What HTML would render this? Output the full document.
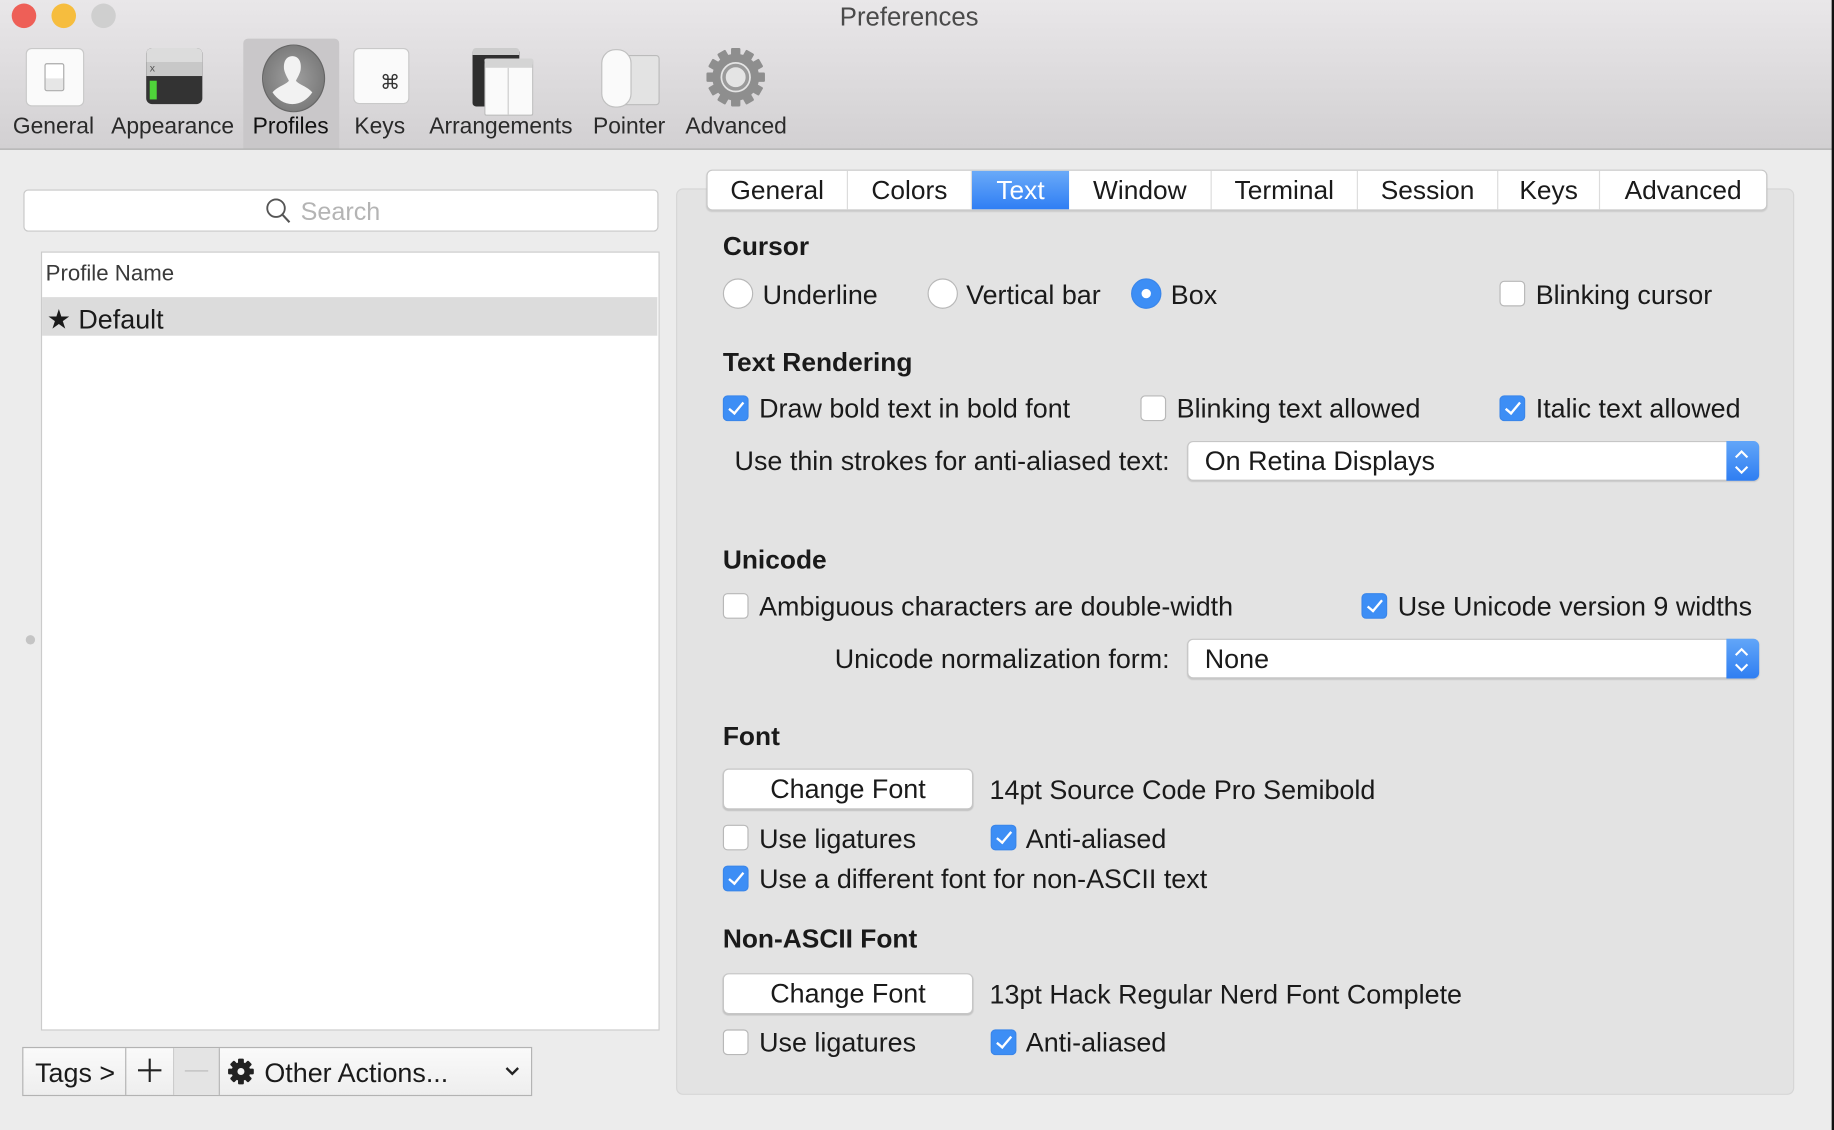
<!DOCTYPE html>
<html><head><meta charset="utf-8"><style>
html,body{margin:0;padding:0;width:1834px;height:1130px;overflow:hidden;background:#ececec}
#w{position:absolute;left:0;top:0;width:1568px;height:966px;transform:scale(1.16964,1.16977);transform-origin:0 0;font-family:"Liberation Sans",sans-serif;color:#1a1a1a;background:#ececec}
.a{position:absolute}
.t{position:absolute;font-size:23px;white-space:nowrap;line-height:26px}
.h{font-weight:bold;font-size:22.5px}
.cb{position:absolute;width:20px;height:20px;border:1px solid #b8b8b8;border-radius:4px;background:#fff}
.cb.on{background:#3d8ef5;border-color:#3a86ea}
.cb.on::after{content:"";position:absolute;left:7px;top:2px;width:5px;height:11px;border:solid #fff;border-width:0 2.5px 2.5px 0;transform:rotate(40deg)}
.rd{position:absolute;width:24px;height:24px;border:1px solid #b8b8b8;border-radius:50%;background:#fff}
.rd.on{background:#3d8ef5;border-color:#3a86ea}
.rd.on::after{content:"";position:absolute;left:8px;top:8px;width:8px;height:8px;border-radius:50%;background:#fff}
.pop{position:absolute;left:1015px;width:487px;height:32px;background:#fff;border:1px solid #c6c6c6;border-radius:5px;box-shadow:0 1px 1px rgba(0,0,0,.12)}
.pop span{position:absolute;left:14px;top:3px;font-size:23px}
.pop i{position:absolute;right:-1px;top:-1px;width:28px;height:34px;background:linear-gradient(#62a6f8,#2f7ef2);border-radius:0 5px 5px 0}
.pop svg{position:absolute;right:6px;top:5px}
.btn{position:absolute;left:618px;width:212px;height:33px;background:#fff;border:1px solid #c6c6c6;border-radius:5px;box-shadow:0 1px 1px rgba(0,0,0,.15);text-align:center;font-size:23px;line-height:33px}
.tab{position:absolute;top:0;height:33px;line-height:33px;font-size:22.5px;text-align:center;border-right:1px solid #dcdcdc}
.tl{position:absolute;top:99px;font-size:19.5px;color:#2a2a2a;line-height:1}
</style></head><body><div id="w">
<div class="a" style="left:0;top:0;width:1568px;height:127px;background:linear-gradient(#e9e7e9,#d2d0d2);border-bottom:1px solid #a8a8a8"></div>
<div class="a" style="left:10px;top:3px;width:21px;height:21px;border-radius:50%;background:#ee5f57"></div>
<div class="a" style="left:44px;top:3px;width:21px;height:21px;border-radius:50%;background:#f6bd3e"></div>
<div class="a" style="left:78px;top:3px;width:21px;height:21px;border-radius:50%;background:#cfcfcf"></div>
<div class="t" style="left:718px;top:2px;font-size:22px;color:#4a4a4a">Preferences</div>
<div class="a" style="left:208px;top:33px;width:82px;height:94px;background:#c9c7c9;border-radius:4px 4px 0 0"></div>
<div class="a" style="left:22px;top:41px;width:48px;height:48px;background:#fafafa;border:1px solid #c9c9c9;border-radius:5px"></div>
<div class="a" style="left:38px;top:54px;width:15px;height:22px;background:#fff;border:1px solid #aaa;border-radius:2px;box-shadow:inset 0 -10px 0 #e6e6e6"></div>
<div class="a" style="left:125px;top:41px;width:48px;height:48px;background:#333;border-radius:5px;overflow:hidden"><div style="height:12px;background:#dcdcdc"></div><div style="height:12px;background:#c8c8c8;font-size:9px;color:#555;padding-left:3px">x</div><div style="position:absolute;left:3px;top:28px;width:6px;height:16px;background:#4fd33a"></div></div>
<div class="a" style="left:224px;top:38px;width:52px;height:56px;border-radius:50%;background:radial-gradient(#a0a0a0,#6d6d6d);border:1px solid #666"></div>
<svg class="a" style="left:224px;top:38px" width="52" height="56"><path d="M26 10c6 0 8 6 7 12-1 4-3 7-4 9 2 3 10 5 14 10-4 6-10 10-17 10s-13-4-17-10c4-5 12-7 14-10-1-2-3-5-4-9-1-6 1-12 7-12z" fill="#f2f2f2"/></svg>
<div class="a" style="left:302px;top:41px;width:48px;height:48px;background:#fafafa;border:1px solid #c9c9c9;border-radius:5px;font-size:17px;text-align:right;box-sizing:border-box;padding:19px 7px 0 0;color:#333">⌘</div>
<div class="a" style="left:404px;top:41px;width:40px;height:44px;background:#2e2e2e;border-top:6px solid #ccc;border-radius:3px"></div>
<div class="a" style="left:414px;top:50px;width:40px;height:40px;background:#fafafa;border:1px solid #bbb;border-top:8px solid #d4d4d4;border-radius:2px"><div style="position:absolute;left:19px;top:0;width:1px;height:100%;background:#ccc"></div></div>
<div class="a" style="left:528px;top:47px;width:34px;height:41px;background:#e3e3e3;border:1px solid #bbb;border-radius:3px"></div>
<div class="a" style="left:514px;top:42px;width:24px;height:48px;background:#fafafa;border:1px solid #c0c0c0;border-radius:12px"></div>
<svg class="a" style="left:602px;top:39px" width="54" height="54" viewBox="0 0 54 54"><g fill="#8e8e8e"><circle cx="27" cy="27" r="20"/><g id="k"><rect x="23" y="2" width="8" height="10" rx="1"/></g><use href="#k" transform="rotate(30 27 27)"/><use href="#k" transform="rotate(60 27 27)"/><use href="#k" transform="rotate(90 27 27)"/><use href="#k" transform="rotate(120 27 27)"/><use href="#k" transform="rotate(150 27 27)"/><use href="#k" transform="rotate(180 27 27)"/><use href="#k" transform="rotate(210 27 27)"/><use href="#k" transform="rotate(240 27 27)"/><use href="#k" transform="rotate(270 27 27)"/><use href="#k" transform="rotate(300 27 27)"/><use href="#k" transform="rotate(330 27 27)"/></g><circle cx="27" cy="27" r="13" fill="#e4e4e4"/><circle cx="27" cy="27" r="10" fill="none" stroke="#9a9a9a" stroke-width="3"/></svg>
<div class="tl" style="left:11px">General</div>
<div class="tl" style="left:95px">Appearance</div>
<div class="tl" style="left:216px;color:#111">Profiles</div>
<div class="tl" style="left:303px">Keys</div>
<div class="tl" style="left:367px">Arrangements</div>
<div class="tl" style="left:507px">Pointer</div>
<div class="tl" style="left:586px">Advanced</div>
<div class="a" style="left:1566px;top:0;width:2px;height:966px;background:#111"></div>
<div class="a" style="left:20px;top:162px;width:541px;height:34px;background:#fff;border:1px solid #c8c8c8;border-radius:4px"></div>
<svg class="a" style="left:226px;top:168px" width="24" height="24"><circle cx="10" cy="10" r="7.5" fill="none" stroke="#555" stroke-width="1.6"/><path d="M15.5 15.5l6 6.5" stroke="#555" stroke-width="1.8"/></svg>
<div class="t" style="left:257px;top:168px;color:#b4b4b4;font-size:21.5px">Search</div>
<div class="a" style="left:35px;top:215px;width:527px;height:664px;background:#fff;border:1px solid #cbcbcb"></div>
<div class="t" style="left:39px;top:222px;font-size:19px;color:#3a3a3a">Profile Name</div>
<div class="a" style="left:36px;top:254px;width:526px;height:33px;background:#dcdcdc"></div>
<div class="t" style="left:40px;top:260px">★ Default</div>
<div class="a" style="left:22px;top:543px;width:8px;height:8px;border-radius:50%;background:#c4c4c4"></div>
<div class="a" style="left:19px;top:895px;width:434px;height:40px;background:linear-gradient(#fafafa,#eeeeee);border:1px solid #b3b3b3"></div>
<div class="a" style="left:107px;top:896px;width:1px;height:40px;background:#b3b3b3"></div>
<div class="a" style="left:148px;top:896px;width:1px;height:40px;background:#c8c8c8"></div>
<div class="a" style="left:149px;top:896px;width:38px;height:40px;background:#e4e4e4"></div>
<div class="a" style="left:187px;top:896px;width:1px;height:40px;background:#b3b3b3"></div>
<div class="t" style="left:30px;top:904px">Tags &gt;</div>
<svg class="a" style="left:117px;top:904px" width="22" height="22"><path d="M11 1v20M1 11h20" stroke="#222" stroke-width="1.8"/></svg>
<div class="a" style="left:158px;top:915px;width:20px;height:1px;background:#bbb"></div>
<svg class="a" style="left:194px;top:904px" width="24" height="24" viewBox="0 0 24 24"><g fill="#222"><circle cx="12" cy="12" r="8"/><rect x="9.5" y="1" width="5" height="22" rx="1"/><rect x="9.5" y="1" width="5" height="22" rx="1" transform="rotate(45 12 12)"/><rect x="9.5" y="1" width="5" height="22" rx="1" transform="rotate(90 12 12)"/><rect x="9.5" y="1" width="5" height="22" rx="1" transform="rotate(135 12 12)"/></g><circle cx="12" cy="12" r="3" fill="#f3f3f3"/></svg>
<div class="t" style="left:226px;top:904px">Other Actions...</div>
<svg class="a" style="left:430px;top:910px" width="16" height="12"><path d="M3 3l5 5 5-5" fill="none" stroke="#222" stroke-width="2"/></svg>
<div class="a" style="left:578px;top:161px;width:954px;height:773px;background:#e3e3e3;border:1px solid #d6d6d6;border-radius:6px"></div>
<div class="a" style="left:604px;top:145px;width:905px;height:33px;background:#fff;border:1px solid #c8c8c8;border-radius:5px;box-shadow:0 1px 1px rgba(0,0,0,.1);overflow:hidden">
<div class="tab" style="left:0;width:119px">General</div>
<div class="tab" style="left:120px;width:105px">Colors</div>
<div class="tab" style="left:226px;width:83px;background:linear-gradient(#6aaaf8,#2f7ef4);color:#fff;border:none">Text</div>
<div class="tab" style="left:309px;width:121px">Window</div>
<div class="tab" style="left:431px;width:124px">Terminal</div>
<div class="tab" style="left:556px;width:119px">Session</div>
<div class="tab" style="left:676px;width:86px">Keys</div>
<div class="tab" style="left:763px;width:142px;border:none">Advanced</div>
</div>
<div class="t h" style="left:618px;top:198px">Cursor</div>
<div class="rd" style="left:618px;top:238px"></div><div class="t" style="left:652px;top:239px">Underline</div>
<div class="rd" style="left:793px;top:238px"></div><div class="t" style="left:826px;top:239px">Vertical bar</div>
<div class="rd on" style="left:967px;top:238px"></div><div class="t" style="left:1001px;top:239px">Box</div>
<div class="cb" style="left:1282px;top:240px"></div><div class="t" style="left:1313px;top:239px">Blinking cursor</div>
<div class="t h" style="left:618px;top:297px">Text Rendering</div>
<div class="cb on" style="left:618px;top:338px"></div><div class="t" style="left:649px;top:336px">Draw bold text in bold font</div>
<div class="cb" style="left:975px;top:338px"></div><div class="t" style="left:1006px;top:336px">Blinking text allowed</div>
<div class="cb on" style="left:1282px;top:338px"></div><div class="t" style="left:1313px;top:336px">Italic text allowed</div>
<div class="t" style="right:568px;top:381px">Use thin strokes for anti-aliased text:</div>
<div class="pop" style="top:377px"><span>On Retina Displays</span><i></i><svg width="16" height="24"><path d="M3 8l5-5 5 5M3 16l5 5 5-5" fill="none" stroke="#fff" stroke-width="1.8"/></svg></div>
<div class="t h" style="left:618px;top:466px">Unicode</div>
<div class="cb" style="left:618px;top:507px"></div><div class="t" style="left:649px;top:505px">Ambiguous characters are double-width</div>
<div class="cb on" style="left:1164px;top:507px"></div><div class="t" style="left:1195px;top:505px">Use Unicode version 9 widths</div>
<div class="t" style="right:568px;top:550px">Unicode normalization form:</div>
<div class="pop" style="top:546px"><span>None</span><i></i><svg width="16" height="24"><path d="M3 8l5-5 5 5M3 16l5 5 5-5" fill="none" stroke="#fff" stroke-width="1.8"/></svg></div>
<div class="t h" style="left:618px;top:617px">Font</div>
<div class="btn" style="top:657px">Change Font</div>
<div class="t" style="left:846px;top:662px">14pt Source Code Pro Semibold</div>
<div class="cb" style="left:618px;top:705px"></div><div class="t" style="left:649px;top:704px">Use ligatures</div>
<div class="cb on" style="left:847px;top:705px"></div><div class="t" style="left:877px;top:704px">Anti-aliased</div>
<div class="cb on" style="left:618px;top:740px"></div><div class="t" style="left:649px;top:738px">Use a different font for non-ASCII text</div>
<div class="t h" style="left:618px;top:790px">Non-ASCII Font</div>
<div class="btn" style="top:832px">Change Font</div>
<div class="t" style="left:846px;top:837px">13pt Hack Regular Nerd Font Complete</div>
<div class="cb" style="left:618px;top:880px"></div><div class="t" style="left:649px;top:878px">Use ligatures</div>
<div class="cb on" style="left:847px;top:880px"></div><div class="t" style="left:877px;top:878px">Anti-aliased</div>
</div></body></html>
